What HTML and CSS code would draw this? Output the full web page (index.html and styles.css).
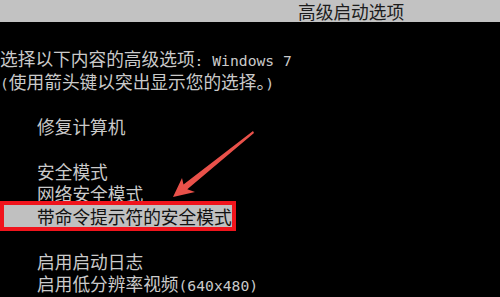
FILE: index.html
```html
<!DOCTYPE html>
<html lang="zh-CN">

<head>
    <meta charset="UTF-8">
    <meta name="viewport" content="width=device-width, initial-scale=1.0">
    <title>高级启动选项</title>
    <link rel="stylesheet" href="styles.css">
</head>

<body>
    <div class="titlebar">高级启动选项</div>

    <main class="screen">
        <div class="line">选择以下内容的高级选项<span class="en">: Windows 7</span></div>
        <div class="line"><span class="en">(</span>使用箭头键以突出显示您的选择。<span class="en">)</span></div>
        <div class="line"></div>
        <div class="line item">修复计算机</div>
        <div class="line"></div>
        <div class="line item">安全模式</div>
        <div class="line item">网络安全模式</div>
        <div class="line item selected">带命令提示符的安全模式</div>
        <div class="line"></div>
        <div class="line item">启用启动日志</div>
        <div class="line item">启用低分辨率视频<span class="en">(640x480)</span></div>
    </main>

    <!-- annotation arrow pointing at the selected row -->
    <svg class="arrow" width="500" height="297" viewBox="0 0 500 297">
        <polygon points="173,197 182,178 183.5,184.6 253,131 254,133 187.3,189.2 195,192" />
    </svg>
</body>

</html>
```

FILE: styles.css
```css
* {
    margin: 0;
    padding: 0;
    box-sizing: border-box;
}

body {
    position: relative;
    height: 297px;
    overflow: hidden;
    background: #000;
    color: #cacaca;
    font-family: "Noto Sans CJK SC", "Liberation Sans", sans-serif;
    font-size: 17.7px;
}

.titlebar {
    height: 22px;
    line-height: 22px;
    padding-left: 298px;
    background: #c2c2c2;
    color: #1c1c1c;
    white-space: nowrap;
}

.screen {
    padding-top: 25px;
    line-height: 22.5px;
}

.line {
    height: 22.5px;
    white-space: nowrap;
}

.item {
    padding-left: 37px;
}

.selected {
    width: 228px;
    margin-left: 4px;
    padding-left: 33px;
    background: #c0c0c0;
    color: #111;
    outline: 4px solid #f0141c;
}

.en {
    font-family: "DejaVu Sans Mono", "Liberation Mono", monospace;
    font-size: 14.7px;
}

.arrow {
    position: absolute;
    left: 0;
    top: 0;
}

.arrow polygon {
    fill: #e9514a;
}
```
